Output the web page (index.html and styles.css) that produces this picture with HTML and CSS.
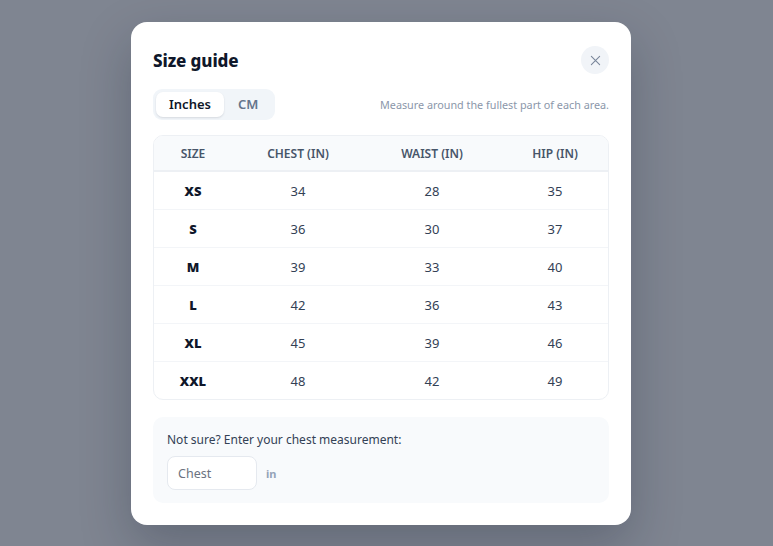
FILE: index.html
```html
<!DOCTYPE html>
<html>
<head>
<meta charset="utf-8">
<link rel="stylesheet" href="styles.css">
</head>
<body>
<div class="overlay">
  <div class="modal">
    <div class="head">
      <h2 class="title">Size guide</h2>
      <button class="close" aria-label="Close">
        <svg width="11" height="11" viewBox="0 0 12 12"><path d="M1.5 1.5L10.5 10.5M10.5 1.5L1.5 10.5" stroke="#7a879b" stroke-width="1.2" stroke-linecap="round"/></svg>
      </button>
    </div>
    <div class="controls">
      <div class="toggle">
        <span class="opt active">Inches</span>
        <span class="opt">CM</span>
      </div>
      <p class="hint">Measure around the fullest part of each area.</p>
    </div>
    <div class="table-wrap">
      <table class="sizes">
        <colgroup><col class="c1"><col class="c2"><col class="c3"><col class="c4"></colgroup>
        <thead>
          <tr><th>Size</th><th>Chest (in)</th><th>Waist (in)</th><th>Hip (in)</th></tr>
        </thead>
        <tbody>
          <tr><td class="sz">XS</td><td>34</td><td>28</td><td>35</td></tr>
          <tr><td class="sz">S</td><td>36</td><td>30</td><td>37</td></tr>
          <tr><td class="sz">M</td><td>39</td><td>33</td><td>40</td></tr>
          <tr><td class="sz">L</td><td>42</td><td>36</td><td>43</td></tr>
          <tr><td class="sz">XL</td><td>45</td><td>39</td><td>46</td></tr>
          <tr><td class="sz">XXL</td><td>48</td><td>42</td><td>49</td></tr>
        </tbody>
      </table>
    </div>
    <div class="finder">
      <p class="finder-label">Not sure? Enter your chest measurement:</p>
      <div class="finder-row">
        <input class="chest" type="text" placeholder="Chest">
        <span class="unit">in</span>
      </div>
    </div>
  </div>
</div>
</body>
</html>
```
FILE: styles.css
```css
* { box-sizing: border-box; }
html, body { margin: 0; padding: 0; }
body {
  width: 773px;
  height: 546px;
  background: #7f8591;
  font-family: "Noto Sans", "Open Sans", sans-serif;
  overflow: hidden;
}
.overlay {
  height: 546px;
  display: flex;
  justify-content: flex-start;
  padding-top: 22px;
  padding-left: 131px;
}
.modal {
  width: 500px;
  height: 503px;
  background: #fff;
  border-radius: 16px;
  padding: 22px;
  box-shadow: 0 20px 50px rgba(15, 23, 42, 0.25);
}
.head {
  display: flex;
  justify-content: space-between;
  align-items: center;
  height: 32px;
}
.title {
  margin: 0;
  font-size: 17px;
  font-weight: 800;
  color: #0f172a;
  letter-spacing: -0.1px;
}
.close {
  width: 28px;
  height: 28px;
  border-radius: 50%;
  border: none;
  background: #f1f4f8;
  display: flex;
  align-items: center;
  justify-content: center;
  padding: 0;
}
.controls {
  display: flex;
  justify-content: space-between;
  align-items: center;
  margin-top: 12px;
  height: 32px;
}
.toggle {
  display: flex;
  background: #f1f5f9;
  border-radius: 9px;
  padding: 3px;
  height: 31px;
}
.opt {
  display: flex;
  align-items: center;
  justify-content: center;
  font-size: 13px;
  font-weight: 600;
  color: #64748b;
  padding: 0 14px;
  border-radius: 7px;
}
.opt.active {
  background: #fff;
  color: #0f172a;
  box-shadow: 0 1px 2px rgba(15, 23, 42, 0.12);
  width: 68px;
  padding: 0;
}
.hint {
  margin: 0;
  font-size: 10.8px;
  color: #8b97aa;
}
.table-wrap {
  margin-top: 15px;
  border: 1px solid #edf0f4;
  border-radius: 10px;
  overflow: hidden;
}
.sizes {
  width: 100%;
  border-collapse: collapse;
  table-layout: fixed;
}
.c1 { width: 78px; }
.c2 { width: 132px; }
.c3 { width: 136px; }
.c4 { width: 110px; }
.sizes th {
  height: 35px;
  background: #f8fafc;
  font-size: 12px;
  font-weight: 600;
  text-transform: uppercase;
  color: #475569;
  text-align: center;
  border-bottom: 2px solid #edf0f4;
  padding: 0;
}
.sizes td {
  height: 38px;
  text-align: center;
  font-size: 13px;
  color: #334155;
  border-bottom: 1px solid #f3f5f8;
  padding: 0;
  padding-top: 1px;
}
.sizes tr:last-child td { border-bottom: none; }
.sizes td.sz {
  font-weight: 900;
  color: #0f172a;
}
.finder {
  margin-top: 17px;
  background: #f8fafc;
  border-radius: 10px;
  padding: 14px 14px 13px;
}
.finder-label {
  margin: 0;
  font-size: 12px;
  color: #334155;
  line-height: 18px;
}
.finder-row {
  display: flex;
  align-items: center;
  gap: 9px;
  margin-top: 7px;
}
.chest {
  width: 90px;
  height: 34px;
  border: 1px solid #e5e9ef;
  border-radius: 8px;
  background: #fff;
  padding: 0 10px;
  font-family: inherit;
  font-size: 12.5px;
  color: #334155;
  outline: none;
}
.chest::placeholder { color: #6b7280; }
.unit {
  font-size: 11px;
  font-weight: 700;
  color: #94a3b8;
}
```
